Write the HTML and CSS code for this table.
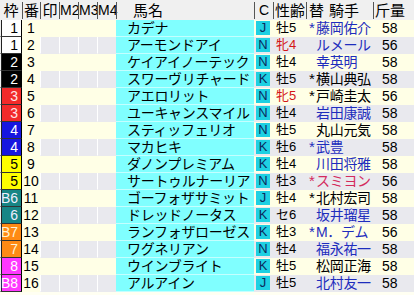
FILE: index.html
```html
<!DOCTYPE html>
<html lang="ja">
<head>
<meta charset="utf-8">
<link rel="stylesheet" href="styles.css">
</head>
<body>
<div class="tbl">
  <div class="hdr">
    <div class="h">枠</div>
    <div class="h sep">番</div>
    <div class="h sep">印</div>
    <div class="h sep lat">M2</div>
    <div class="h sep lat">M3</div>
    <div class="h sep lat">M4</div>
    <div class="h sep hname">馬名</div>
    <div class="h sep lat">C</div>
    <div class="h sep">性齢</div>
    <div class="h sep hjk">替<span class="gap"></span>騎手</div>
    <div class="h sep hwt">斤量</div>
  </div>

  <div class="row odd"><div class="waku w1">1</div><div class="ban">1</div><div class="mk"></div><div class="mk"></div><div class="mk"></div><div class="mk"></div><div class="name">カデナ</div><div class="cc"><span class="cbox">J</span></div><div class="sex">牡5</div><div class="jk blue"><span class="ast">*</span>藤岡佑介</div><div class="wt">58</div></div>
  <div class="row even"><div class="waku w1">1</div><div class="ban">2</div><div class="mk"></div><div class="mk"></div><div class="mk"></div><div class="mk"></div><div class="name">アーモンドアイ</div><div class="cc"><span class="cbox">N</span></div><div class="sex mare">牝4</div><div class="jk blue"><span class="ast"></span>ルメール</div><div class="wt">56</div></div>
  <div class="row odd"><div class="waku w2">2</div><div class="ban">3</div><div class="mk"></div><div class="mk"></div><div class="mk"></div><div class="mk"></div><div class="name">ケイアイノーテック</div><div class="cc"><span class="cbox">N</span></div><div class="sex">牡4</div><div class="jk blue"><span class="ast"></span>幸英明</div><div class="wt">58</div></div>
  <div class="row even"><div class="waku w2">2</div><div class="ban">4</div><div class="mk"></div><div class="mk"></div><div class="mk"></div><div class="mk"></div><div class="name">スワーヴリチャード</div><div class="cc"><span class="cbox">K</span></div><div class="sex">牡5</div><div class="jk"><span class="ast">*</span>横山典弘</div><div class="wt">58</div></div>
  <div class="row odd"><div class="waku w3">3</div><div class="ban">5</div><div class="mk"></div><div class="mk"></div><div class="mk"></div><div class="mk"></div><div class="name">アエロリット</div><div class="cc"><span class="cbox">N</span></div><div class="sex mare">牝5</div><div class="jk"><span class="ast">*</span>戸崎圭太</div><div class="wt">56</div></div>
  <div class="row even"><div class="waku w3">3</div><div class="ban">6</div><div class="mk"></div><div class="mk"></div><div class="mk"></div><div class="mk"></div><div class="name">ユーキャンスマイル</div><div class="cc"><span class="cbox">N</span></div><div class="sex">牡4</div><div class="jk blue"><span class="ast"></span>岩田康誠</div><div class="wt">58</div></div>
  <div class="row odd"><div class="waku w4">4</div><div class="ban">7</div><div class="mk"></div><div class="mk"></div><div class="mk"></div><div class="mk"></div><div class="name">スティッフェリオ</div><div class="cc"><span class="cbox">N</span></div><div class="sex">牡5</div><div class="jk"><span class="ast"></span>丸山元気</div><div class="wt">58</div></div>
  <div class="row even"><div class="waku w4">4</div><div class="ban">8</div><div class="mk"></div><div class="mk"></div><div class="mk"></div><div class="mk"></div><div class="name">マカヒキ</div><div class="cc"><span class="cbox">K</span></div><div class="sex">牡6</div><div class="jk blue"><span class="ast">*</span>武豊</div><div class="wt">58</div></div>
  <div class="row odd"><div class="waku w5">5</div><div class="ban">9</div><div class="mk"></div><div class="mk"></div><div class="mk"></div><div class="mk"></div><div class="name">ダノンプレミアム</div><div class="cc"><span class="cbox">K</span></div><div class="sex">牡4</div><div class="jk blue"><span class="ast"></span>川田将雅</div><div class="wt">58</div></div>
  <div class="row even"><div class="waku w5">5</div><div class="ban">10</div><div class="mk"></div><div class="mk"></div><div class="mk"></div><div class="mk"></div><div class="name">サートゥルナーリア</div><div class="cc"><span class="cbox">N</span></div><div class="sex">牡3</div><div class="jk red"><span class="ast">*</span>スミヨン</div><div class="wt">56</div></div>
  <div class="row odd"><div class="waku w6">B6</div><div class="ban">11</div><div class="mk"></div><div class="mk"></div><div class="mk"></div><div class="mk"></div><div class="name">ゴーフォザサミット</div><div class="cc"><span class="cbox">J</span></div><div class="sex">牡4</div><div class="jk"><span class="ast">*</span>北村宏司</div><div class="wt">58</div></div>
  <div class="row even"><div class="waku w6">6</div><div class="ban">12</div><div class="mk"></div><div class="mk"></div><div class="mk"></div><div class="mk"></div><div class="name">ドレッドノータス</div><div class="cc"><span class="cbox">K</span></div><div class="sex">セ6</div><div class="jk blue"><span class="ast"></span>坂井瑠星</div><div class="wt">58</div></div>
  <div class="row odd"><div class="waku w7">B7</div><div class="ban">13</div><div class="mk"></div><div class="mk"></div><div class="mk"></div><div class="mk"></div><div class="name">ランフォザローゼス</div><div class="cc"><span class="cbox">K</span></div><div class="sex">牡3</div><div class="jk blue"><span class="ast">*</span>M．デム</div><div class="wt">56</div></div>
  <div class="row even"><div class="waku w7">7</div><div class="ban">14</div><div class="mk"></div><div class="mk"></div><div class="mk"></div><div class="mk"></div><div class="name">ワグネリアン</div><div class="cc"><span class="cbox">N</span></div><div class="sex">牡4</div><div class="jk blue"><span class="ast"></span>福永祐一</div><div class="wt">58</div></div>
  <div class="row odd"><div class="waku w8">8</div><div class="ban">15</div><div class="mk"></div><div class="mk"></div><div class="mk"></div><div class="mk"></div><div class="name">ウインブライト</div><div class="cc"><span class="cbox">K</span></div><div class="sex">牡5</div><div class="jk"><span class="ast"></span>松岡正海</div><div class="wt">58</div></div>
  <div class="row even"><div class="waku w8">B8</div><div class="ban">16</div><div class="mk"></div><div class="mk"></div><div class="mk"></div><div class="mk"></div><div class="name">アルアイン</div><div class="cc"><span class="cbox">J</span></div><div class="sex">牡5</div><div class="jk blue"><span class="ast"></span>北村友一</div><div class="wt">58</div></div>
</div>
</body>
</html>
```

FILE: styles.css
```css
* { box-sizing: border-box; }
html, body {
  margin: 0;
  padding: 0;
  background: #fffff2;
  width: 414px;
  height: 295px;
  overflow: hidden;
  font-family: "Liberation Sans", "Noto Sans CJK JP", sans-serif;
  color: #000;
}
.tbl {
  display: flex;
  flex-direction: column;
  width: 414px;
}
.hdr, .row {
  display: grid;
  grid-template-columns: 22px 18px 19px 19px 19px 19px 138px 19px 33px 67px 41px;
}
.hdr {
  height: 20px;
  background: #f0f0f0;
  padding: 2px 0 1px;
}
.h {
  font-size: 15px;
  line-height: 17px;
  height: 17px;
  text-align: center;
  white-space: nowrap;
}
.h.sep { border-left: 1px solid #555; }
.h.lat {
  font-family: "Liberation Sans Narrow", "Liberation Sans", sans-serif;
  font-size: 14px;
}
.h.hname { text-align: left; padding-left: 16px; }
.h.hjk { text-align: left; padding-left: 2px; }
.h.hwt { text-align: left; padding-left: 1px; }
.gap { display: inline-block; width: 5px; }

.row {
  height: 17px;
  font-size: 14px;
  line-height: 16px;
  white-space: nowrap;
}
.row > div {
  height: 17px;
  border-bottom: 1px solid transparent;
}
.row.odd { background: #ffffe6; }
.row.even { background: #e9e9ee; }

.waku {
  text-align: right;
  padding-right: 3px;
  border-left: 1px solid #f0f0f0;
  border-right: 1px solid #000;
  box-shadow: inset 1px 0 0 #222;
  font-family: "Liberation Sans Narrow", "Liberation Sans", sans-serif;
}
.row > .waku { border-bottom: 1px solid #333; }
.w1 { background: #ffffff; color: #000; }
.w2 { background: #000000; color: #fff; }
.w3 { background: #f22a2a; color: #ffe6e6; }
.w4 { background: #1616e0; color: #fff; }
.w5 { background: #ffff00; color: #000; }
.w6 { background: #178585; color: #eef; }
.w7 { background: #ff8a14; color: #fff3d6; }
.w8 { background: #ff38ff; color: #fff; }

.ban {
  background: #ffffe6;
  text-align: center;
  font-family: "Liberation Sans Narrow", "Liberation Sans", sans-serif;
}
.row.odd > .ban { border-bottom-color: #ffffe6; }
.mk { border-left: 1px solid #fff; }
.row.odd > .mk { border-left-color: #ffffe6; }

.name {
  background: #80ffff;
  padding-left: 11px;
  letter-spacing: -0.3px;
}
.row > .name { border-bottom: 1px solid #c4ffff; }

.cc {
  display: flex;
  align-items: center;
  padding-left: 2px;
}
.cbox {
  display: block;
  width: 14px;
  height: 14px;
  background: #1fd0e2;
  color: #0c2a5c;
  font-size: 13px;
  line-height: 14px;
  text-align: center;
}
.sex { padding-left: 3px; font-size: 13px; }
.sex.mare { color: #d41616; }
.jk { padding-left: 3px; letter-spacing: -0.3px; }
.jk.blue { color: #1e2dbd; }
.jk.red { color: #d42a5c; }
.ast {
  display: inline-block;
  width: 7px;
  letter-spacing: 0;
  font-size: 15px;
}
.wt { padding-left: 9px; font-family: "Liberation Sans Narrow", "Liberation Sans", sans-serif; }
```
